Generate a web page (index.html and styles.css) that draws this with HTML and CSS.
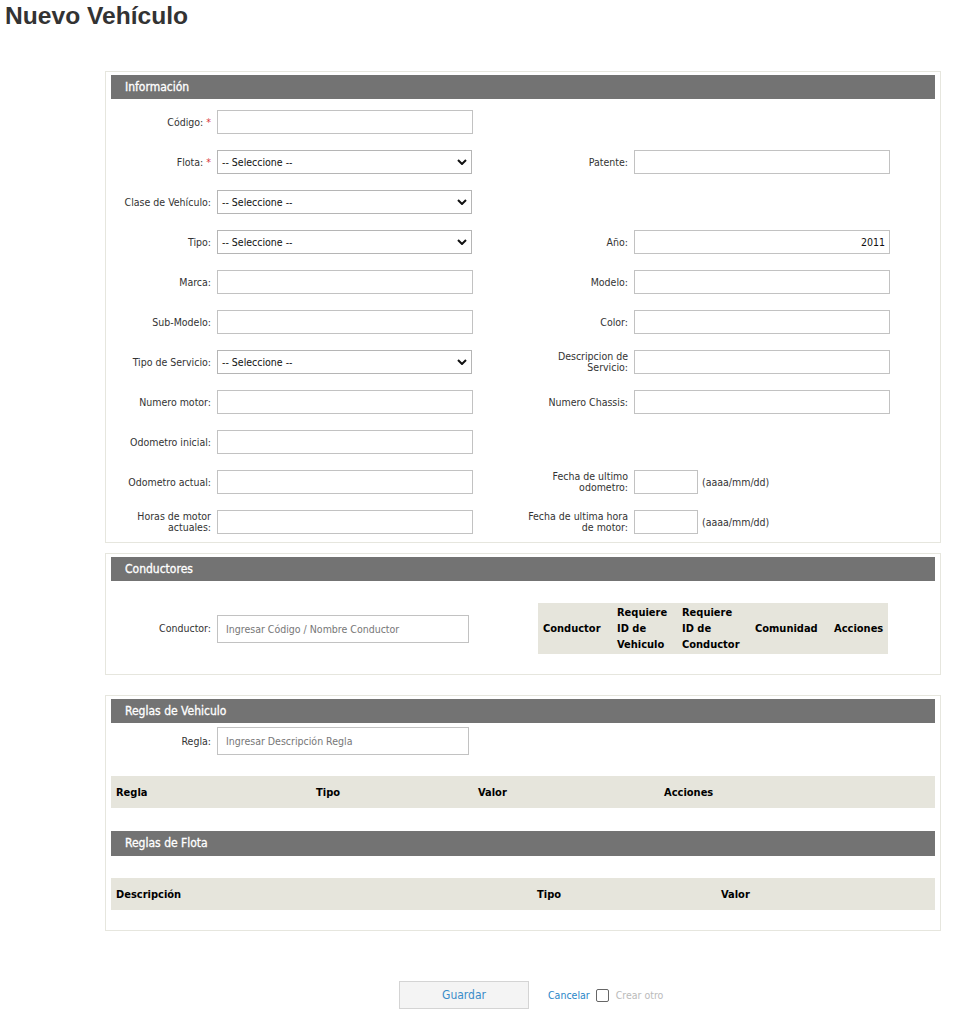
FILE: index.html
```html
<!DOCTYPE html>
<html lang="es">
<head>
<meta charset="utf-8">
<title>Nuevo Vehículo</title>
<link rel="stylesheet" href="styles.css">
</head>
<body>
<h1 class="page-title">Nuevo Vehículo</h1>

<div class="sections">
  <section class="panel">
    <div class="panel-header">Información</div>
    <div class="form-grid">
      <div class="row">
        <div class="cell">
          <label class="lbl">Código: <span class="req">*</span></label>
          <input class="txt" type="text">
        </div>
      </div>
      <div class="row">
        <div class="cell">
          <label class="lbl">Flota: <span class="req">*</span></label>
          <span class="sel-wrap"><select class="sel"><option>-- Seleccione --</option></select><svg class="chev" viewBox="0 0 10 6" width="10" height="6"><path d="M1 1 L5 5 L9 1" fill="none" stroke="#111" stroke-width="2"/></svg></span>
        </div>
        <div class="cell cell-right">
          <label class="lbl lbl-right">Patente:</label>
          <input class="txt" type="text">
        </div>
      </div>
      <div class="row">
        <div class="cell">
          <label class="lbl">Clase de Vehículo:</label>
          <span class="sel-wrap"><select class="sel"><option>-- Seleccione --</option></select><svg class="chev" viewBox="0 0 10 6" width="10" height="6"><path d="M1 1 L5 5 L9 1" fill="none" stroke="#111" stroke-width="2"/></svg></span>
        </div>
      </div>
      <div class="row">
        <div class="cell">
          <label class="lbl">Tipo:</label>
          <span class="sel-wrap"><select class="sel"><option>-- Seleccione --</option></select><svg class="chev" viewBox="0 0 10 6" width="10" height="6"><path d="M1 1 L5 5 L9 1" fill="none" stroke="#111" stroke-width="2"/></svg></span>
        </div>
        <div class="cell cell-right">
          <label class="lbl lbl-right">Año:</label>
          <input class="txt txt-num" type="text" value="2011">
        </div>
      </div>
      <div class="row">
        <div class="cell">
          <label class="lbl">Marca:</label>
          <input class="txt" type="text">
        </div>
        <div class="cell cell-right">
          <label class="lbl lbl-right">Modelo:</label>
          <input class="txt" type="text">
        </div>
      </div>
      <div class="row">
        <div class="cell">
          <label class="lbl">Sub-Modelo:</label>
          <input class="txt" type="text">
        </div>
        <div class="cell cell-right">
          <label class="lbl lbl-right">Color:</label>
          <input class="txt" type="text">
        </div>
      </div>
      <div class="row">
        <div class="cell">
          <label class="lbl">Tipo de Servicio:</label>
          <span class="sel-wrap"><select class="sel"><option>-- Seleccione --</option></select><svg class="chev" viewBox="0 0 10 6" width="10" height="6"><path d="M1 1 L5 5 L9 1" fill="none" stroke="#111" stroke-width="2"/></svg></span>
        </div>
        <div class="cell cell-right">
          <label class="lbl lbl-right">Descripcion de<br>Servicio:</label>
          <input class="txt" type="text">
        </div>
      </div>
      <div class="row">
        <div class="cell">
          <label class="lbl">Numero motor:</label>
          <input class="txt" type="text">
        </div>
        <div class="cell cell-right">
          <label class="lbl lbl-right">Numero Chassis:</label>
          <input class="txt" type="text">
        </div>
      </div>
      <div class="row">
        <div class="cell">
          <label class="lbl">Odometro inicial:</label>
          <input class="txt" type="text">
        </div>
      </div>
      <div class="row">
        <div class="cell">
          <label class="lbl">Odometro actual:</label>
          <input class="txt" type="text">
        </div>
        <div class="cell cell-right">
          <label class="lbl lbl-right">Fecha de ultimo<br>odometro:</label>
          <input class="txt txt-date" type="text">
          <span class="hint">(aaaa/mm/dd)</span>
        </div>
      </div>
      <div class="row">
        <div class="cell">
          <label class="lbl">Horas de motor<br>actuales:</label>
          <input class="txt" type="text">
        </div>
        <div class="cell cell-right">
          <label class="lbl lbl-right">Fecha de ultima hora<br>de motor:</label>
          <input class="txt txt-date" type="text">
          <span class="hint">(aaaa/mm/dd)</span>
        </div>
      </div>
    </div>
  </section>

  <section class="panel panel-gap-sm">
    <div class="panel-header">Conductores</div>
    <div class="drivers">
      <div class="cell">
        <label class="lbl">Conductor:</label>
        <input class="txt txt-search" type="text" placeholder="Ingresar Código / Nombre Conductor">
      </div>
      <table class="grid-table drivers-table">
        <thead>
          <tr>
            <th class="c1">Conductor</th>
            <th class="c2">Requiere<br>ID de<br>Vehiculo</th>
            <th class="c3">Requiere<br>ID de<br>Conductor</th>
            <th class="c4">Comunidad</th>
            <th class="c5">Acciones</th>
          </tr>
        </thead>
      </table>
    </div>
  </section>

  <section class="panel panel-gap-lg">
    <div class="panel-header">Reglas de Vehiculo</div>
    <div class="rules">
      <div class="cell">
        <label class="lbl">Regla:</label>
        <input class="txt txt-search" type="text" placeholder="Ingresar Descripción Regla">
      </div>
      <table class="grid-table wide-table rules-table">
        <thead>
          <tr>
            <th class="r1">Regla</th>
            <th class="r2">Tipo</th>
            <th class="r3">Valor</th>
            <th class="r4">Acciones</th>
          </tr>
        </thead>
      </table>
    </div>
    <div class="panel-header panel-header-sub">Reglas de Flota</div>
    <div class="fleet-rules">
      <table class="grid-table wide-table fleet-table">
        <thead>
          <tr>
            <th class="f1">Descripción</th>
            <th class="f2">Tipo</th>
            <th class="f3">Valor</th>
          </tr>
        </thead>
      </table>
    </div>
  </section>
</div>

<div class="footer">
  <button class="btn-save" type="button">Guardar</button>
  <a class="link-cancel" href="#">Cancelar</a>
  <span class="chk"></span>
  <span class="chk-label">Crear otro</span>
</div>
</body>
</html>
```

FILE: styles.css
```css
html, body {
  margin: 0;
  padding: 0;
  background: #fff;
}

body {
  font-family: "DejaVu Sans Condensed", "DejaVu Sans", sans-serif;
  font-stretch: condensed;
  font-size: 10.5px;
  color: #333;
}

.page-title {
  margin: 0;
  padding: 2px 0 0 5px;
  font-family: "Liberation Sans", Arial, sans-serif;
  font-stretch: normal;
  font-size: 24.6px;
  line-height: 28px;
  font-weight: bold;
  color: #333;
}

.sections {
  margin: 41px 0 0 105px;
  width: 836px;
}

.panel {
  box-sizing: border-box;
  border: 1px solid #e6e6de;
  padding: 3px 5px 4px;
}

.panel-gap-sm {
  margin-top: 10px;
}

.panel-gap-lg {
  margin-top: 20px;
}

.panel-header {
  height: 24px;
  line-height: 24px;
  background: #737373;
  color: #fff;
  font-size: 12px;
  font-weight: normal;
  padding-left: 14px;
  -webkit-text-stroke: 0.3px #fff;
}

.form-grid {
  display: flex;
  flex-direction: column;
  gap: 16px;
  padding: 11px 0 4px;
}

.row {
  display: flex;
  height: 24px;
}

.cell {
  display: flex;
  align-items: center;
}

.row > .cell:first-child {
  width: 362px;
}

.lbl {
  box-sizing: border-box;
  width: 100px;
  margin-right: 6px;
  text-align: right;
  line-height: 11px;
  color: #333;
  white-space: nowrap;
}

.lbl-right {
  width: 155px;
}

.req {
  color: #d9343a;
}

.txt {
  box-sizing: border-box;
  width: 256px;
  height: 24px;
  border: 1px solid #c2c2c2;
  padding: 0 4px;
  margin: 0;
  font-family: inherit;
  font-stretch: condensed;
  font-size: 10.5px;
  color: #111;
  background: #fff;
  outline: none;
}

.txt-num {
  text-align: right;
}

.txt-date {
  width: 64px;
}

.hint {
  margin-left: 4px;
  color: #333;
}

.sel-wrap {
  position: relative;
  display: inline-block;
  width: 255px;
  height: 24px;
}

.sel {
  box-sizing: border-box;
  width: 255px;
  height: 24px;
  border: 1px solid #b5b5b5;
  padding: 0 0 0 4px;
  margin: 0;
  appearance: none;
  -webkit-appearance: none;
  background: #fff;
  font-family: inherit;
  font-stretch: condensed;
  font-size: 10.5px;
  color: #111;
  border-radius: 0;
  outline: none;
}

.chev {
  position: absolute;
  right: 5px;
  top: 9px;
  pointer-events: none;
}

.drivers {
  display: flex;
  align-items: center;
  padding: 22px 0 16px;
}

.txt-search {
  width: 252px;
  height: 28px;
  padding: 0 8px;
}

.txt-search::placeholder {
  color: #777;
}

.grid-table {
  border-collapse: collapse;
  background: #e6e5dc;
  table-layout: fixed;
}

.grid-table th {
  box-sizing: border-box;
  text-align: left;
  font-size: 11px;
  font-weight: bold;
  color: #000;
  padding: 0 0 0 5px;
  vertical-align: middle;
}

.drivers-table {
  margin-left: 69px;
  width: 350px;
}

.drivers-table th {
  height: 51px;
  line-height: 16px;
}

.drivers-table .c1 { width: 74px; }
.drivers-table .c2 { width: 65px; }
.drivers-table .c3 { width: 73px; }
.drivers-table .c4 { width: 79px; }
.drivers-table .c5 { width: 59px; }

.rules {
  padding-top: 4px;
}

.wide-table {
  width: 824px;
}

.wide-table th {
  height: 32px;
}

.rules-table {
  margin-top: 21px;
}

.rules-table .r1 { width: 200px; }
.rules-table .r2 { width: 162px; }
.rules-table .r3 { width: 186px; }
.rules-table .r4 { width: 276px; }

.panel-header-sub {
  margin-top: 23px;
  height: 25px;
  line-height: 25px;
}

.fleet-rules {
  padding: 22px 0 16px;
}

.fleet-table .f1 { width: 421px; }
.fleet-table .f2 { width: 184px; }
.fleet-table .f3 { width: 219px; }

.footer {
  display: flex;
  align-items: center;
  margin: 50px 0 0 399px;
  height: 28px;
}

.btn-save {
  box-sizing: border-box;
  width: 130px;
  height: 28px;
  border: 1px solid #d4d4d4;
  background: #f4f4f4;
  color: #3a8cc9;
  font-family: inherit;
  font-stretch: condensed;
  font-size: 12px;
  margin: 0;
  padding: 0;
}

.link-cancel {
  margin-left: 19px;
  color: #2a86c8;
  text-decoration: none;
  font-size: 10.5px;
}

.chk {
  box-sizing: border-box;
  display: inline-block;
  width: 13px;
  height: 13px;
  margin-left: 6px;
  border: 1px solid #666;
  border-radius: 2px;
  background: #fff;
}

.chk-label {
  margin-left: 7px;
  color: #bbb;
}
```
